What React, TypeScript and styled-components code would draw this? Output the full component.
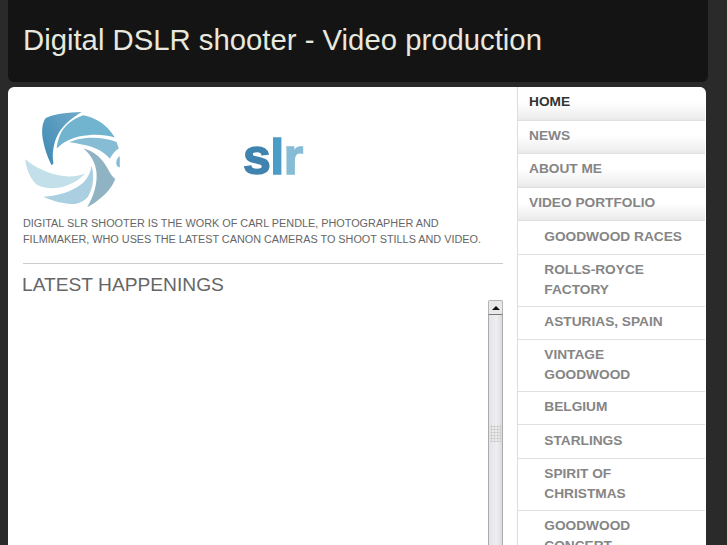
import React from "react";
import styled, { createGlobalStyle } from "styled-components";

const GlobalStyle = createGlobalStyle`
  html, body {
    margin: 0;
    padding: 0;
    height: 545px;
    overflow: hidden;
    background-color: #2a2a2a;
    font-family: "Liberation Sans", Arial, sans-serif;
  }
`;

const navItems = [
  { label: "HOME", active: true },
  { label: "NEWS" },
  { label: "ABOUT ME" },
  { label: "VIDEO PORTFOLIO" },
  { label: "GOODWOOD RACES", sub: true },
  { label: "ROLLS-ROYCE FACTORY", sub: true, twoLines: true },
  { label: "ASTURIAS, SPAIN", sub: true },
  { label: "VINTAGE GOODWOOD", sub: true, twoLines: true },
  { label: "BELGIUM", sub: true },
  { label: "STARLINGS", sub: true },
  { label: "SPIRIT OF CHRISTMAS", sub: true, twoLines: true },
  { label: "GOODWOOD CONCERT", sub: true, twoLines: true },
];

const SwirlLogo = () => (
  <svg width="100" height="103" viewBox="60 80 300 310">
    <defs>
      <linearGradient id="bladeTop" x1="0" y1="1" x2="1" y2="0">
        <stop offset="0" stopColor="#3d88b4" />
        <stop offset="1" stopColor="#70abc9" />
      </linearGradient>
    </defs>
    <path fill="url(#bladeTop)" d="M245 95 C205 96 165 100 137 113 C124 130 124 160 130 185 C136 215 146 238 155 255 L160 250 C156 225 158 190 176 158 C192 132 220 110 245 95 Z" />
    <path fill="#71b4d0" d="M250 105 C285 112 320 130 345 172 C320 164 290 162 265 165 C225 168 195 180 170 205 C172 180 182 150 205 130 C220 118 235 110 250 105 Z" />
    <path fill="#86bdd4" d="M208 186 C240 170 300 166 350 185 L357 205 C345 212 335 225 330 236 C315 218 290 204 265 197 C245 192 225 188 208 186 Z" />
    <path fill="#8fb3c2" d="M250 205 C285 212 310 240 325 268 C332 282 340 292 346 296 C340 315 325 335 305 352 C292 364 278 374 262 382 C280 350 292 315 290 280 C288 250 272 222 250 205 Z" />
    <path fill="#a9cfe0" d="M275 256 C283 285 282 320 264 350 C254 362 240 368 225 372 C190 372 155 362 130 350 C175 348 215 335 245 312 C262 298 272 278 275 256 Z" />
    <path fill="#c3dfea" d="M75 237 C100 258 140 280 190 288 C215 291 238 287 255 280 C242 296 220 310 190 320 C160 328 130 324 110 314 C90 295 78 265 75 237 Z" />
    <path fill="#86bdd4" d="M360 228 C350 232 346 250 352 258 L360 262 Z" />
  </svg>
);

const App = () => {
  return (
    <>
      <GlobalStyle />
      <Page>
        <Header>
          <SiteTitle>Digital DSLR shooter - Video production</SiteTitle>
        </Header>
        <Card>
          <Main>
            <LogoRow>
              <SwirlLogo />
              <SlrMark>
                <SlrS>s</SlrS>
                <SlrL>l</SlrL>
                <SlrR>r</SlrR>
              </SlrMark>
            </LogoRow>
            <Intro>
              Digital SLR shooter is the work of Carl Pendle, photographer and
              filmmaker, who uses the latest Canon cameras to shoot stills and
              video.
            </Intro>
            <Divider />
            <SectionTitle>Latest Happenings</SectionTitle>
            <FrameArea>
              <ScrollBar>
                <ScrollButton>
                  <ArrowUp />
                </ScrollButton>
                <ScrollTrack>
                  <Grip />
                </ScrollTrack>
              </ScrollBar>
            </FrameArea>
          </Main>
          <Sidebar>
            {navItems.map((item) => (
              <NavItem
                key={item.label}
                $sub={item.sub}
                $active={item.active}
                $twoLines={item.twoLines}
              >
                {item.label}
              </NavItem>
            ))}
          </Sidebar>
        </Card>
      </Page>
    </>
  );
};

export default App;

const Page = styled.div`
  display: flex;
  flex-direction: column;
  gap: 5px;
  width: 700px;
  height: 545px;
  margin-left: 8px;
  overflow: hidden;
`;

const Header = styled.header`
  flex: none;
  display: flex;
  align-items: center;
  height: 82px;
  padding: 0 15px 2px;
  box-sizing: border-box;
  background-color: #141414;
  border-radius: 0 0 6px 6px;
`;

const SiteTitle = styled.h1`
  margin: 0;
  font-size: 29.3px;
  font-weight: normal;
  color: #e8e8de;
`;

const Card = styled.div`
  flex: none;
  display: flex;
  width: 698px;
  height: 600px;
  background-color: #fff;
  border-radius: 6px 6px 0 0;
`;

const Main = styled.main`
  width: 480px;
  margin-left: 15px;
  padding-top: 20px;
`;

const LogoRow = styled.div`
  display: flex;
  align-items: center;
  gap: 123px;
  height: 103px;
  margin-left: -3px;
`;

const SlrMark = styled.div`
  display: flex;
  align-items: baseline;
  margin-top: -4px;
  font-size: 50px;
  font-weight: bold;
  line-height: 50px;
  letter-spacing: -0.5px;
  -webkit-text-stroke: 1.5px currentColor;
`;

const SlrS = styled.span`
  color: #3f83ae;
`;

const SlrL = styled.span`
  color: #4b9cc6;
`;

const SlrR = styled.span`
  color: #86bcd5;
`;

const Intro = styled.p`
  margin: 5px 0 0;
  font-size: 10.85px;
  line-height: 16px;
  color: #666;
  text-transform: uppercase;
`;

const Divider = styled.hr`
  height: 1px;
  margin: 16px 0 0;
  border: none;
  background-color: #ccc;
`;

const SectionTitle = styled.h2`
  margin: 9px 0 0 -1px;
  font-size: 19.2px;
  font-weight: normal;
  line-height: 24px;
  color: #666;
  text-transform: uppercase;
`;

const FrameArea = styled.div`
  display: flex;
  justify-content: flex-end;
  margin-top: 3px;
`;

const ScrollBar = styled.div`
  display: flex;
  flex-direction: column;
  width: 15px;
  height: 300px;
  box-sizing: border-box;
`;

const ScrollButton = styled.div`
  display: flex;
  align-items: center;
  justify-content: center;
  height: 15px;
  box-sizing: border-box;
  background-color: #e9e9ec;
  border: 1px solid #b4b4b4;
  border-bottom-color: #777;
  border-radius: 2px 2px 0 0;
`;

const ArrowUp = styled.div`
  width: 0;
  height: 0;
  border-left: 4px solid transparent;
  border-right: 4px solid transparent;
  border-bottom: 4px solid #111;
`;

const ScrollTrack = styled.div`
  display: flex;
  flex: 1;
  justify-content: center;
  box-sizing: border-box;
  background: linear-gradient(to right, #e4e4e8, #eeeef1 60%, #dcdce0);
  border-left: 1px solid #aaa;
  border-right: 1px solid #aaa;
`;

const Grip = styled.div`
  width: 11px;
  height: 17px;
  margin-top: 110px;
  background-image: radial-gradient(#c4c4c4 0.9px, transparent 1.1px);
  background-size: 3px 3px;
`;

const Sidebar = styled.nav`
  width: 188px;
  margin-left: 14px;
  box-sizing: border-box;
  border-left: 1px solid #ddd;
  border-radius: 0 6px 0 0;
  overflow: hidden;
`;

const NavItem = styled.div<{
  $sub?: boolean;
  $active?: boolean;
  $twoLines?: boolean;
}>`
  padding-top: 5.2px;
  padding-bottom: ${(p) => (p.$twoLines ? "5.5px" : "7.4px")};
  padding-left: ${(p) => (p.$sub ? "26.3px" : "11px")};
  padding-right: 18px;
  font-size: 13.7px;
  font-weight: bold;
  line-height: 20px;
  color: ${(p) => (p.$active ? "#333" : "#858585")};
  border-bottom: 1px solid #e0e0e0;
  background: ${(p) =>
    p.$sub
      ? "#fff"
      : "linear-gradient(to bottom, #fff 45%, #efefef 90%, #e8e8e8 100%)"};
`;
